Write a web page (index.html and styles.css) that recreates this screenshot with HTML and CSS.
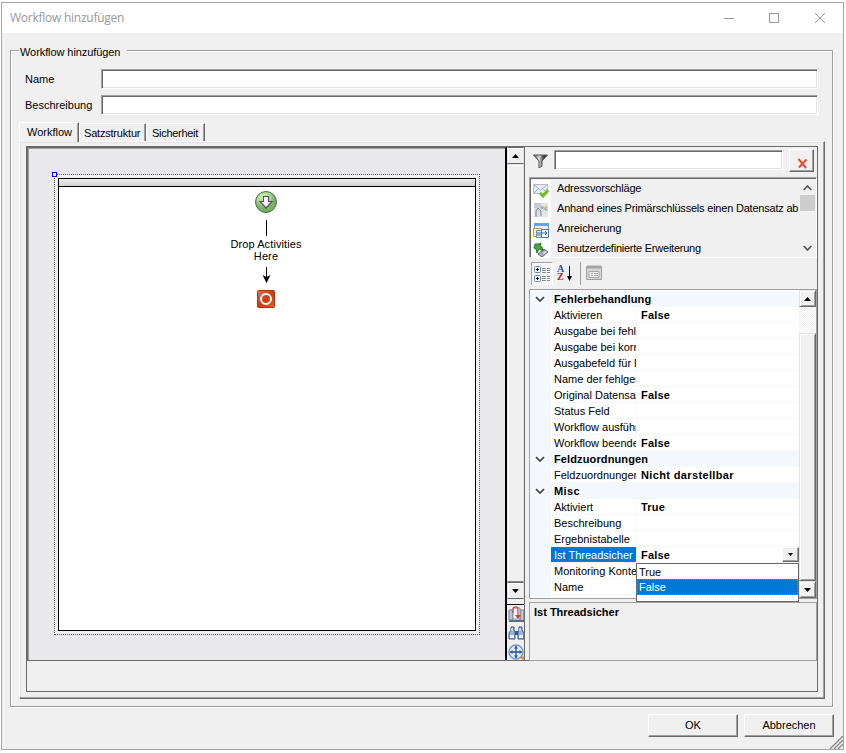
FILE: index.html
```html
<!DOCTYPE html>
<html lang="de">
<head>
<meta charset="utf-8">
<title>Workflow hinzufügen</title>
<link rel="stylesheet" href="styles.css">
</head>
<body>
<div class="window">
  <header class="titlebar">
    <span class="title">Workflow hinzufügen</span>
    <svg class="caption" width="104" height="12" fill="none" stroke="#999" shape-rendering="crispEdges"><path d="M0 6.500H10M45.500 1.500h9v9h-9z"/><path shape-rendering="auto" d="M91 1l10 10M101 1L91 11"/></svg>
  </header>
  <main class="group">
    <div class="legend"><span>Workflow hinzufügen</span></div>
    <div class="field"><label class="t-name">Name</label><div class="input"></div></div>
    <div class="field"><label class="t-desc">Beschreibung</label><div class="input"></div></div>
    <nav class="tabs"><span class="tab active">Workflow</span><span class="tab second">Satzstruktur</span><span class="tab third">Sicherheit</span></nav>
    <section class="page">
      <div class="frame">
        <div class="work">
          <div class="designer">
            <div class="selection">
              <i class="handle"></i>
              <div class="canvas">
                <div class="canvas-head"></div>
                <svg class="start" width="24" height="24" viewBox="0 0 24 24"><defs><radialGradient id="g" cx=".4" cy=".3"><stop offset="0" stop-color="#d6f0c4"/><stop offset=".6" stop-color="#a9d890"/><stop offset="1" stop-color="#78b066"/></radialGradient></defs><circle cx="12" cy="12" r="10.500" fill="url(#g)" stroke="#427448"/><path d="M9.500 6.500h5v5h3.500L12 18 6 11.500h3.500z" fill="#fff" stroke="#5b4d67" stroke-width="1.200"/></svg>
                <svg class="line" width="2" height="16"><path d="M.5 0v16" stroke="#000"/></svg>
                <p class="drop">Drop Activities<br>Here</p>
                <svg class="arrow" width="10" height="17"><path d="M4.500 0v12" stroke="#000"/><path d="M.5 8l4 2 4-2-4 8z"/></svg>
                <svg class="stop" width="18" height="18"><defs><linearGradient id="r" x2="1" y2="1"><stop stop-color="#dd7350"/><stop offset=".5" stop-color="#d13c13"/><stop offset="1" stop-color="#e25a29"/></linearGradient></defs><rect x=".5" y=".5" width="17" height="17" rx="1" fill="url(#r)" stroke="#a93516"/><circle cx="9" cy="9" r="5" fill="none" stroke="#fff" stroke-width="2"/></svg>
              </div>
            </div>
          </div>
          <div class="vscroll">
            <div class="sb"><svg width="7" height="4"><path d="M0 4L3.500 0 7 4z"/></svg></div>
            <div class="vthumb"></div>
            <div class="sb"><svg width="7" height="4"><path d="M0 0h7L3.500 4z"/></svg></div>
            <div class="vtools">
              <svg width="17" height="57" viewBox="0 0 17 57">
                <path d="M1 4h4v10H1zM12 4h4v11h-4z" fill="#b8c4d1" stroke="#6e8297"/><path d="M5 2h7v11H5z" fill="#f5f7fa" stroke="#7d8fa2"/><path d="M1 15h15" stroke="#536d85" stroke-width="2"/><path d="M5 7V3q0-2 2.500-2T10 3v8" fill="none" stroke="#d84c49" stroke-width="1.300"/><path d="M7 9h6l-3 4z" fill="#db3737"/>
                <g transform="translate(0 -1)"><path d="M3 22h3v3l1 2v7H1v-6l2-3zM11 22h3v3l2 3v6h-6v-7l1-2z" fill="#97b4e0" stroke="#36578f"/><path d="M7 26h3v4H7z" fill="#435a8b"/><path d="M2 30h4v3H2zM11 30h4v3h-4z" fill="#edf3fd"/><path d="M4 23v3M12 23v3" stroke="#fff"/></g>
                <g transform="translate(0 -3)"><circle cx="8" cy="49" r="7" fill="#e0edfb" stroke="#7096c3" stroke-width="1.500"/><path d="M8 44v10M3 49h10" stroke="#265291" stroke-width="1.300"/><path d="M8 42.500l2 3H6zM8 55.500l2-3H6zM1.500 49l3-2v4zM14.500 49l-3-2v4z" fill="#265291"/><path d="M12 55l3-2 2 2-2 2z" fill="#dc9032"/></g>
              </svg>
            </div>
          </div>
          <aside class="side">
            <div class="filter">
              <svg class="funnel" width="15" height="14"><defs><linearGradient id="f"><stop stop-color="#333"/><stop offset=".4" stop-color="#ddd"/><stop offset=".75" stop-color="#333"/></linearGradient></defs><path d="M.5 1h14L9 7v5l-3 2V7z" fill="url(#f)" stroke="#555"/></svg>
              <div class="input search"></div>
              <div class="clear"><svg width="11" height="11"><path d="M1.500 1l7.500 9M9.500 1.500L2 9.500" stroke="#e94b30" stroke-width="2" fill="none"/></svg></div>
            </div>
            <div class="list">
              <ul>
                <li><svg width="16" height="16"><path d="M.5 2.500h14v9H.5z" fill="#e5ecf6" stroke="#afbed4"/><path d="M1 3l6.500 5L14 3M1 11l4-4M14 11l-4-4" fill="none" stroke="#a6b2c5"/><path d="M2 2.500h2M8 2.500h2" stroke="#e1a39e"/><path d="M7 11l3 3 5-6" fill="none" stroke="#72bd26" stroke-width="3"/></svg><span class="l1">Adressvorschläge</span></li>
                <li><svg width="16" height="16"><path d="M1 1h14v14H1z" fill="#e2e4e5"/><path d="M1 1h7v5H1z" fill="#c9cccf"/><path d="M3 15V9l2-3 3 3v5" fill="#d8dee5" stroke="#778594"/><path d="M8 7l2-2 2 2 2-3" stroke="#efa963" fill="none" stroke-width="1.500"/><path d="M8 5l2 1M12 7l2 1" stroke="#7eb6df" stroke-width="2"/></svg><span class="l2">Anhand eines Primärschlüssels einen Datensatz ab</span></li>
                <li><svg width="16" height="16"><path d="M1.500 1.500h14v9h-14z" fill="#e5f1fd" stroke="#6a9bd3"/><path d="M1 2.500h15" stroke="#6ca2e3" stroke-width="3"/><path d="M.5 6.500h8v8h-8z" fill="#fff2b2" stroke="#c89c38"/><path d="M3.500 8.500h6v7h-6z" fill="#eaf3ff" stroke="#5d93d0"/><path d="M8.500 7.500h7v8h-7z" fill="#f3f8ff" stroke="#4d78b8"/><path d="M9 11h5M12 9l2 2-2 2M4 11h4M4 13h4" fill="none" stroke="#3566ad"/></svg><span class="l3">Anreicherung</span></li>
                <li><svg width="16" height="16"><path d="M5 12l6-5 4 3-6 5z" fill="#a8adb7" stroke="#62666e"/><path d="M10 11l3-2 1 1-3 2z" fill="#e2e5eb"/><path d="M2 2h4l2-1-1 3 2 1 1 4-4-2-2 4-1-4-2-1z" fill="#4ea342" stroke="#287327"/></svg><span class="l4">Benutzerdefinierte Erweiterung</span></li>
              </ul>
              <div class="lscroll"><svg width="9" height="6"><path d="M.7 5l3.800-4 3.800 4"/></svg><i></i><svg width="9" height="6"><path d="M.7 1l3.800 4 3.800-4"/></svg></div>
            </div>
            <div class="toolbar">
              <span class="tool on"><svg width="17" height="17"><g fill="#fff" stroke="#5e89bb"><rect x=".5" y="1.500" width="6" height="6" rx="1"/><rect x=".5" y="10.500" width="6" height="6" rx="1"/></g><path d="M2 4.500h3M3.500 3v3M2 13.500h3M3.500 12v3" stroke="#000"/><path d="M8 3.500h4M13 3.500h3M8 5.500h4M13 5.500h3M8 7.500h4M13 7.500h3M8 11.500h4M13 11.500h3M8 13.500h4M13 13.500h3M8 15.500h4M13 15.500h3" stroke="#8a8a8a"/></svg></span>
              <span class="tool az"><b>A</b><b>Z</b></span>
              <svg class="down" width="6" height="16"><path d="M2.500 0v13" stroke="#000"/><path d="M0 10h5L2.500 15z"/></svg>
              <i class="sep"></i>
              <svg class="props" width="16" height="15"><path d="M.5 1.500h15v13H.5z" fill="#d5d5d5" stroke="#a0a0a0"/><path d="M1 2h14" stroke="#a4a4a4" stroke-width="3"/><path d="M3 6.500h10v6H3zM5 8.500h2M8 8.500h4M5 10.500h2M8 10.500h4" fill="#eee" stroke="#aaa"/></svg>
            </div>
            <div class="grid">
              <div class="rows">
                <div class="cat"><svg width="10" height="6"><path d="M1 1l4 4 4-4"/></svg><b class="c1">Fehlerbehandlung</b></div>
                <div class="row"><span class="k">Aktivieren</span><b class="v">False</b></div>
                <div class="row"><span class="k">Ausgabe bei fehlerhaften</span><b class="v"></b></div>
                <div class="row"><span class="k">Ausgabe bei korrekten</span><b class="v"></b></div>
                <div class="row"><span class="k">Ausgabefeld für Fehler</span><b class="v"></b></div>
                <div class="row"><span class="k">Name der fehlgeschlagenen</span><b class="v"></b></div>
                <div class="row"><span class="k">Original Datensatz</span><b class="v">False</b></div>
                <div class="row"><span class="k">Status Feld</span><b class="v"></b></div>
                <div class="row"><span class="k">Workflow ausführen</span><b class="v"></b></div>
                <div class="row"><span class="k">Workflow beenden</span><b class="v">False</b></div>
                <div class="cat"><svg width="10" height="6"><path d="M1 1l4 4 4-4"/></svg><b class="c1">Feldzuordnungen</b></div>
                <div class="row"><span class="k">Feldzuordnungen</span><b class="v wide">Nicht darstellbar</b></div>
                <div class="cat"><svg width="10" height="6"><path d="M1 1l4 4 4-4"/></svg><b class="wide">Misc</b></div>
                <div class="row"><span class="k">Aktiviert</span><b class="v">True</b></div>
                <div class="row"><span class="k">Beschreibung</span><b class="v"></b></div>
                <div class="row"><span class="k">Ergebnistabelle</span><b class="v"></b></div>
                <div class="row selected"><span class="k">Ist Threadsicher</span><b class="v">False</b><i class="drop-btn"><svg width="5" height="3"><path d="M0 0h5L2.500 3z"/></svg></i>
                  <div class="menu"><span>True</span><span class="hot">False</span></div>
                </div>
                <div class="row"><span class="k">Monitoring Kontext</span><b class="v"></b></div>
                <div class="row"><span class="k">Name</span><b class="v"></b></div>
              </div>
              <div class="gscroll"><div class="sb"><svg width="7" height="4"><path d="M0 4L3.500 0 7 4z"/></svg></div><div class="dither"></div><div class="gthumb"></div><div class="sb"><svg width="7" height="4"><path d="M0 0h7L3.500 4z"/></svg></div></div>
            </div>
            <div class="help"><b>Ist Threadsicher</b></div>
          </aside>
        </div>
      </div>
    </section>
  </main>
  <footer class="buttons"><div class="btn ok"><span>OK</span></div><div class="btn cancel"><span>Abbrechen</span></div></footer>
  <svg class="grip" width="13" height="13"><path d="M0 13L13 0M4 13l9-9M8 13l5-5" stroke="#858585" stroke-width="1.300"/></svg>
</div>
</body>
</html>
```
FILE: styles.css
```css
* { box-sizing: border-box; }
body { margin: 0; width: 846px; height: 753px; overflow: hidden; background: #fff; font: 11px/16px "Liberation Sans", Arial, sans-serif; color: #000; }
svg { display: block; flex: none; }
span, b, label, p { white-space: nowrap; }
.window { position: relative; width: 843px; height: 748px; margin: 2px 0 0 1px; border: 1px solid #a5a5a5; background: #f0f0f0; }
.titlebar { height: 30px; background: #fff; display: flex; justify-content: space-between; padding: 0 15px 0 8px; align-items: center; }
.title { font: 12px/30px "Open Sans", sans-serif; color: #999; letter-spacing: -.25px; }

.group { margin: 17px 0 0 8px; width: 823px; height: 657px; border: 1px solid #a0a0a0; box-shadow: 1px 1px #fff, inset 1px 1px #fff; padding-left: 8px; }
.legend { height: 18px; margin-top: -9px; }
.legend span { display: inline-block; width: 108px; line-height: 20px; padding-left: 1px; background: #f0f0f0; letter-spacing: -.08px; }
.field { display: flex; height: 20px; margin: 9px 0 0 6px; line-height: 20px; }
.field + .field { margin-top: 6px; }
.field label { width: 76px; }
.input { width: 717px; height: 20px; background: #fff; border: 1px solid; border-color: #a0a0a0 #fff #fff #a0a0a0; box-shadow: inset 1px 1px #696969, inset -1px -1px #e3e3e3; }
.tabs { display: flex; align-items: flex-end; height: 19px; margin-top: 7px; }
.tab { height: 18px; line-height: 19px; border: solid; border-width: 1px 1px 0 1px; border-color: #fff #696969 #f0f0f0 #fff; box-shadow: inset -1px 0 #a0a0a0; padding-left: 4px; }
.tab.active { width: 60px; height: 20px; padding-left: 7px; line-height: 18px; border-radius: 2px 0 0; position: relative; margin-bottom: -1px; background: #f0f0f0; z-index: 1; }
.second { width: 67px; letter-spacing: -.2px; }
.third { width: 59px; padding-left: 5px; letter-spacing: -.3px; }
.page { width: 806px; height: 558px; border: 1px solid; border-color: #fff #696969 #696969 #fff; box-shadow: inset -1px -1px #a0a0a0, inset 1px 1px #e3e3e3; padding: 4px 6px; }
.frame { width: 792px; height: 546px; border: 1px solid #696969; }
.work { display: flex; height: 514px; border-bottom: 1px solid #696969; }
.designer { width: 480px; border: solid; border-width: 1px 2px 0 1px; border-color: #696969 #000 #696969 #696969; background: #e9e9eb; box-shadow: inset 1px 1px #a0a0a0; padding: 26px 0 0 26px; }
.selection { position: relative; width: 426px; height: 461px; border: 1px dotted #555; padding: 3px; background: #f0f0f0; }
.handle { position: absolute; left: -3px; top: -3px; width: 5px; height: 5px; border: 1px solid #00f; background: #fff; }
.canvas { width: 418px; height: 453px; border: 1px solid #000; background: #fff; display: flex; flex-direction: column; align-items: center; padding-right: 2px; }
.canvas-head { align-self: stretch; margin-right: -2px; height: 8px; border-bottom: 1px solid #000; background: linear-gradient(#eee, #d2d2d2); flex: none; }
.start { margin-top: 3px; }
.line { margin: 6px 0 0 1px; }
.drop { margin: 2px 0 0; text-align: center; line-height: 12px; letter-spacing: .1px; }
.arrow { margin: 5px 0 0 1px; }
.stop { margin-top: 6px; }
.vscroll { width: 18px; border-right: 1px solid #696969; background: #f0f0f0; }
.sb { width: 17px; height: 17px; background: #f0f0f0; border: 1px solid; border-color: #e3e3e3 #696969 #696969 #e3e3e3; box-shadow: inset 1px 1px #fff, inset -1px -1px #a0a0a0; display: flex; align-items: center; justify-content: center; }
.vscroll .sb { border-color: #696969 #e3e3e3 #696969 #e3e3e3; box-shadow: inset 1px 1px #fff; }
.vthumb { width: 17px; height: 418px; border: 1px solid; border-color: #e3e3e3 #e3e3e3 #888 #e3e3e3; box-shadow: inset 1px 1px #fff; }
.vtools { margin-top: 5px; border-top: 1px solid #111; height: 56px; overflow: hidden; padding-top: 1px; }
.vtools svg { margin-left: 1px; }
.side { width: 292px; padding-left: 4px; }
.filter { display: flex; height: 30px; padding: 2px 0 0 3px; }
.funnel { margin: 5px 0 0 1px; }
.search { width: 229px; margin: 1px 0 0 6px; }
.clear { width: 25px; height: 23px; margin-left: 6px; border: 1px solid; border-color: #fff #696969 #696969 #fff; box-shadow: inset -1px -1px #a0a0a0; padding: 8px 0 0 7px; }
.list { width: 288px; height: 81px; display: flex; border: 1px solid; border-color: #a0a0a0 #fff #fff #a0a0a0; box-shadow: inset 1px 1px #696969; padding: 2px 0 0 1px; overflow: hidden; }
.list ul { list-style: none; margin: 0; padding: 0; width: 268px; overflow: hidden; }
.list li { height: 20px; line-height: 17px; display: flex; }
.list li svg { box-sizing: content-box; padding: 2px; background: #fff; }
.list li span { margin-left: 6px; }
.list .l1 { letter-spacing: -.2px; }
.list .l2 { letter-spacing: -.21px; }
.list .l3 { letter-spacing: -.1px; }
.list .l4 { letter-spacing: -.24px; }
.lscroll { width: 17px; display: flex; flex-direction: column; align-items: center; }
.lscroll i { width: 15px; height: 16px; margin-top: 4px; background: #cdcdcd; }
.lscroll svg { fill: none; stroke: #555; stroke-width: 1.700; margin-top: 5px; }
.lscroll i + svg { margin-top: 34px; }
.toolbar { height: 31px; display: flex; padding: 4px 0 0 2px; }
.tool.on { width: 22px; height: 23px; border: 1px solid; border-color: #a0a0a0 #fff #fff #a0a0a0; background: #f8f8f8; padding: 2px; }
.az { display: flex; flex-direction: column; font: bold 10px/8px "Liberation Serif", serif; margin: 3px 0 0 4px; width: 8px; color: #2756a4; }
.az b + b { color: #a22b36; }
.down { margin: 4px 0 0 2px; }
.sep { width: 1px; height: 23px; background: #a0a0a0; margin: 0 5px 0 7px; }
.props { margin-top: 3px; }
.grid { width: 288px; height: 310px; border: 1px solid #a0a0a0; background: #fff; display: flex; }
.rows { width: 269px; height: 308px; padding-top: 1px; background: linear-gradient(90deg, #f4f7fc 21px, #fff 21px); }
.cat { height: 16px; background: #f4f7fc; display: flex; }
.cat svg { margin: 5px 9px 0 5px; fill: none; stroke: #444; stroke-width: 1.700; }
.c1 { letter-spacing: .12px; }
.row { position: relative; height: 16px; display: flex; padding-left: 21px; }
.k { width: 86px; padding-left: 3px; overflow: hidden; border-bottom: 1px solid #f4f7fc; border-right: 1px solid #f4f7fc; }
.v { flex: 1; padding-left: 4px; border-bottom: 1px solid #f4f7fc; letter-spacing: .2px; }
.wide { letter-spacing: .36px; }
.selected .k { background: #0078d7; color: #fff; }
.drop-btn { position: absolute; right: 0; top: 0; width: 17px; height: 15px; background: #f0f0f0; border: 1px solid; border-color: #fff #696969 #696969 #fff; box-shadow: inset -1px -1px #a0a0a0; display: grid; place-items: center; }
.menu { position: absolute; left: 106px; top: 16px; width: 163px; height: 39px; border: 1px solid #696969; background: #fff; z-index: 2; }
.menu span { display: block; height: 15px; padding-left: 2px; }
.menu .hot { height: 16px; background: #0078d7; color: #fff; outline: 1px dotted #c47435; outline-offset: -1px; line-height: 16px; }
.gscroll { width: 17px; }
.dither { height: 26px; background: repeating-conic-gradient(#fff 0 25%, #f0f0f0 0 50%) 0 0 / 2px 2px; }
.gthumb { height: 248px; background: #f0f0f0; border: 1px solid; border-color: #e3e3e3 #696969 #696969 #e3e3e3; box-shadow: inset 1px 1px #fff, inset -1px -1px #a0a0a0; }
.help { width: 288px; height: 59px; margin-top: 3px; border: 1px solid #a0a0a0; padding: 1px 4px; }
.buttons { display: flex; margin: 7px 0 0 646px; gap: 6px; }
.btn { width: 90px; height: 23px; text-align: center; line-height: 21px; border: 1px solid; border-color: #fff #696969 #696969 #fff; box-shadow: inset -1px -1px #a0a0a0; }
.grip { position: absolute; right: 0; bottom: 0; }
```
